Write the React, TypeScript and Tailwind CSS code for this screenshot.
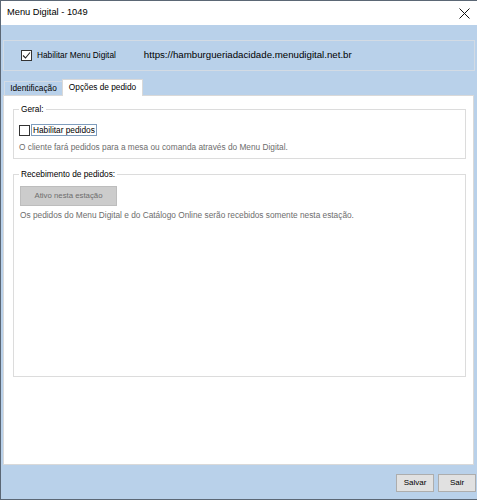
import React from 'react';

function Check({ checked }: { checked: boolean }) {
  return (
    <div className="w-[11px] h-[11px] border border-[#333333] bg-white flex items-center justify-center shrink-0">
      {checked && (
        <svg width="9" height="9" viewBox="0 0 9 9">
          <path d="M1 4.5 L3.5 7 L8 1.5" fill="none" stroke="#222" strokeWidth="1.1" />
        </svg>
      )}
    </div>
  );
}

function GroupBox({ label, className, children }: { label: string; className: string; children: React.ReactNode }) {
  return (
    <div className={`relative border border-[#dcdcdc] ${className}`}>
      <span className="absolute -top-[7px] left-[5px] px-[2px] bg-white text-[8.3px] leading-[12px] text-black">{label}</span>
      {children}
    </div>
  );
}

export default function App() {
  const [menuOn, setMenuOn] = React.useState(true);
  const [pedidos, setPedidos] = React.useState(false);

  return (
    <div className="w-[477px] h-[500px] flex flex-col border-l border-t border-b border-[#5b6775] bg-white font-['Liberation_Sans',Arial,sans-serif] overflow-hidden">
      {/* title bar */}
      <div className="h-[24px] shrink-0 flex items-center justify-between pl-[6px] pr-[7px] bg-white">
        <span className="text-[9.3px] text-black">Menu Digital - 1049</span>
        <svg width="11" height="11" viewBox="0 0 11 11">
          <path d="M0.5 0.5 L10.5 10.5 M10.5 0.5 L0.5 10.5" stroke="#111" strokeWidth="1" />
        </svg>
      </div>

      <div className="flex-1 flex flex-col bg-[#b9d1ea]">
        {/* habilitar menu digital */}
        <div className="mt-[15px] ml-[2px] w-[472px] h-[31px] border border-[#d3dbe4] flex items-center">
          <button className="ml-[17px] flex items-center gap-[5px]" onClick={() => setMenuOn(!menuOn)}>
            <Check checked={menuOn} />
            <span className="text-[8.3px] text-black">Habilitar Menu Digital</span>
          </button>
          <span className="ml-[28px] text-[9.7px] text-black">https://hamburgueriadacidade.menudigital.net.br</span>
        </div>

        {/* tabs */}
        <div className="mt-[8px] ml-[3px] h-[16px] flex items-end">
          <div className="h-[14px] w-[58px] border-t border-l border-[#d3dbe4] flex items-center justify-center text-[8.3px] text-black">
            Identificação
          </div>
          <div className="relative z-10 -mb-px h-[17px] w-[81px] bg-white border border-b-0 border-[#d9d9d9] flex items-start pt-[1px] justify-center text-[8.3px] text-black">
            Opções de pedido
          </div>
        </div>

        {/* tab page */}
        <div className="ml-[2px] w-[471px] h-[370px] bg-white border border-[#d9d9d9] flex flex-col">
          <GroupBox label="Geral:" className="mt-[13px] ml-[9px] w-[453px] h-[50px] flex flex-col">
            <button className="mt-[14px] ml-[5px] flex items-center gap-[1px]" onClick={() => setPedidos(!pedidos)}>
              <Check checked={pedidos} />
              <span className="h-[12px] px-[1px] border border-[#7f9dbd] text-[8.3px] leading-[10px] text-black">Habilitar pedidos</span>
            </button>
            <p className="mt-[5px] ml-[5px] text-[8.3px] leading-[12px] text-[#6d6d6d]">
              O cliente fará pedidos para a mesa ou comanda através do Menu Digital.
            </p>
          </GroupBox>

          <GroupBox label="Recebimento de pedidos:" className="mt-[15px] ml-[9px] w-[453px] h-[203px] flex flex-col">
            <div className="mt-[11px] ml-[6px] w-[97px] h-[20px] bg-[#cccccc] border border-[#bdbdbd] flex items-center justify-center text-[7.8px] text-[#6d6d6d]">
              Ativo nesta estação
            </div>
            <p className="mt-[3px] ml-[6px] text-[8.3px] leading-[12px] text-[#6d6d6d]">
              Os pedidos do Menu Digital e do Catálogo Online serão recebidos somente nesta estação.
            </p>
          </GroupBox>
        </div>

        {/* rodapé */}
        <div className="mt-[9px] flex justify-end gap-[4px] pr-[1px]">
          <button className="w-[38px] h-[18px] bg-[#e1e1e1] border border-[#adadad] text-[8px] text-black">Salvar</button>
          <button className="w-[38px] h-[18px] bg-[#e1e1e1] border border-[#adadad] text-[8px] text-black">Sair</button>
        </div>
      </div>
    </div>
  );
}
